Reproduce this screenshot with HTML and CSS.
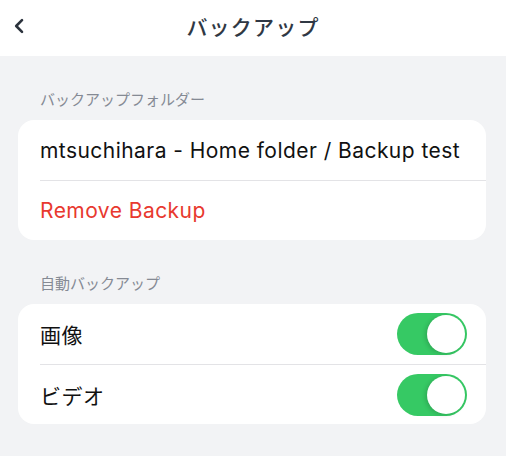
FILE: index.html
```html
<!DOCTYPE html>
<html lang="ja">
<head>
    <meta charset="UTF-8">
    <meta name="viewport" content="width=device-width, initial-scale=1.0">
    <title>バックアップ</title>
    <link rel="stylesheet" href="styles.css">
</head>
<body>

<!-- Header -->
<div class="header">
    <button class="back-btn" aria-label="戻る">
        <svg width="12" height="16" viewBox="0 0 12 16">
            <path d="M9 2.2 L3.2 8 L9 13.8" fill="none" stroke="#2b323c" stroke-width="2.6" stroke-linecap="round" stroke-linejoin="round"/>
        </svg>
    </button>
    <h1>バックアップ</h1>
</div>

<div class="content">
    <!-- Backup folder -->
    <div class="section-title">バックアップフォルダー</div>
    <div class="card">
        <div class="row">mtsuchihara - Home folder / Backup test</div>
        <div class="row danger">Remove Backup</div>
    </div>

    <!-- Auto backup -->
    <div class="section-title">自動バックアップ</div>
    <div class="card">
        <div class="row">
            <span>画像</span>
            <span class="toggle on"><span class="knob"></span></span>
        </div>
        <div class="row">
            <span>ビデオ</span>
            <span class="toggle on"><span class="knob"></span></span>
        </div>
    </div>
</div>

</body>
</html>
```

FILE: styles.css
```css
body {
    font-family: 'Inter', 'Noto Sans CJK JP', sans-serif;
    background-color: #f2f3f5;
    margin: 0;
    padding: 0;
    height: 456px;
}
.header {
    background-color: #ffffff;
    height: 56px;
    display: flex;
    align-items: center;
    justify-content: center;
    position: relative;
}
.header h1 {
    margin: 0;
    font-size: 21px;
    font-weight: 500;
    color: #303844;
    letter-spacing: 1.2px;
    margin-top: -5px;
}
.back-btn {
    position: absolute;
    left: 13px;
    top: 18px;
    background: none;
    border: none;
    padding: 0;
    width: 12px;
    height: 16px;
    display: flex;
}
.content {
    padding: 0 20px 0 18px;
}
.section-title {
    font-size: 15px;
    color: #858a94;
    padding: 34px 0 10px 22px;
    line-height: 20px;
}
.card {
    background-color: #ffffff;
    border-radius: 16px;
    overflow: hidden;
}
.row {
    height: 60px;
    margin-left: 22px;
    padding-right: 19px;
    display: flex;
    align-items: center;
    justify-content: space-between;
    font-size: 21px;
    letter-spacing: 0.45px;
    color: #111111;
    border-top: 1px solid #e3e3e6;
    box-sizing: border-box;
}
.row:first-child {
    border-top: none;
}
.danger {
    color: #e8392f;
}
.toggle {
    width: 70px;
    height: 42px;
    border-radius: 21px;
    background-color: #36c964;
    display: flex;
    align-items: center;
    justify-content: flex-end;
    padding: 0 2px;
    box-sizing: border-box;
}
.knob {
    width: 38px;
    height: 38px;
    border-radius: 50%;
    background-color: #ffffff;
    box-shadow: -2px 1px 4px rgba(0, 0, 0, 0.15);
}
```
